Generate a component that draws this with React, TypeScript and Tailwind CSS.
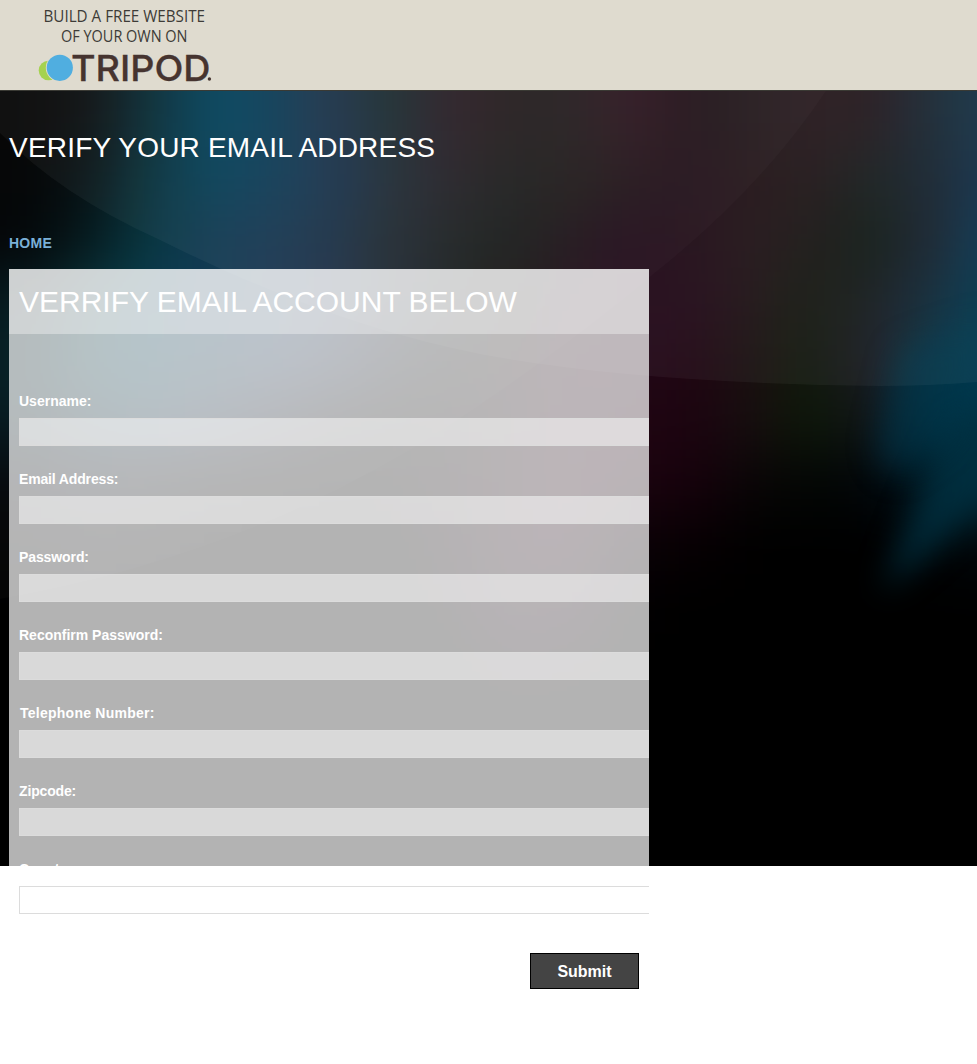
const COLS = 17;
const CELL = 60;

const GLOW: string[] = [
  '030303 080a0b 052832 00415a 083b55 1c3148 182a2e 291b23 211b1b 211c1d 2c121e 1e0f16 20161a 271a1e 25191d 1b2834 143448',
  '020304 040f12 05303a 023e56 0c3a54 17334d 1e2935 231e24 1b1d1c 1e1a19 1f1218 1f0d16 221318 22171a 18201f 16232f 122f4a',
  '000204 01161a 04343f 0e364e 14354f 182f43 1e262f 1a1f1f 161918 1b0f15 1e0816 200c16 221418 1b1614 0e1b14 19202c 083854',
  '03171c 083338 063a4e 0f3852 17344f 20304a 1c2530 181c1e 14130f 200d16 22081a 220a18 201216 141b10 181b1e 10283a 003a4e',
  '041d22 053440 073a4c 143648 1c3450 1c2a40 161a24 131414 1a1013 230914 220818 200512 1a1010 10190c 1c1a24 06303f 003c54',
  '04181e 082430 0c2a3e 14243a 131825 0e0f13 0b0c0b 0c0a0b 160b10 220816 200612 1c0410 180e10 0c1a08 141418 002d3e 003a50',
  '03060b 0a0c16 0b0c11 080808 070707 050505 050505 0e0508 1a0710 220714 1c0510 18000c 0a0607 030603 01060a 001620 003444',
  '030304 050507 040404 010101 000000 000000 000000 0a0206 190610 1d0712 0b0207 080003 000000 000000 000000 000406 00080c',
  '000000 000000 000000 000000 000000 000000 000000 050103 14050f 14040e 020001 000000 000000 000000 000000 000000 000000',
  '000000 000000 000000 000000 000000 000000 000000 000000 090206 070104 000000 000000 000000 000000 000000 000000 000000',
];

function Backdrop() {
  return (
    <svg className="absolute inset-x-0 top-0 h-[775px] w-full bg-black" viewBox="0 91 977 775" preserveAspectRatio="none" aria-hidden="true">
      <defs>
        <filter id="soft" filterUnits="userSpaceOnUse" x="-120" y="-30" width="1260" height="1000" colorInterpolationFilters="sRGB">
          <feGaussianBlur stdDeviation="29" />
        </filter>
        <filter id="streak" filterUnits="userSpaceOnUse" x="780" y="250" width="400" height="450" colorInterpolationFilters="sRGB">
          <feGaussianBlur stdDeviation="15" />
        </filter>
      </defs>
      <g filter="url(#soft)" shapeRendering="crispEdges">
        {GLOW.map((row, j) =>
          row.split(' ').map((c, i) => {
            const left = i === 0 ? -120 : i * CELL;
            const right = i === COLS - 1 ? 1140 : (i + 1) * CELL;
            const top = j === 0 ? -30 : 90 + j * CELL;
            const bottom = 90 + (j + 1) * CELL;
            return <rect key={`${i}-${j}`} x={left} y={top} width={right - left} height={bottom - top} fill={`#${c}`} />;
          }),
        )}
      </g>
      <path d="M1010 400V475Q950 540 882 592Q908 520 948 430Z" fill="#002f40" fillOpacity="0.85" filter="url(#streak)" />
      <path d="M900 350L990 320L950 440L900 475Q870 465 880 430Z" fill="#003a50" fillOpacity="0.5" filter="url(#streak)" />
      <path d="M0 133Q60 195 160 240Q330 325 480 354T880 386Q930 386 977 382V91H0Z" fill="#fff" fillOpacity="0.042" />
      <path d="M826 91Q760 190 651 276Q570 345 450 425Q250 555 0 599V91Z" fill="#fff" fillOpacity="0.02" />
    </svg>
  );
}

function Logo() {
  return (
    <svg className="ml-[30px] block h-[90px] w-[190px]" viewBox="30 0 190 90" role="img" aria-label="Tripod">
      <g fontFamily="'Open Sans', 'Noto Sans', sans-serif" fontSize="15.5" fill="#3d3b37">
        <text x="43.5" y="22" textLength="161.5" lengthAdjust="spacingAndGlyphs">BUILD A FREE WEBSITE</text>
        <text x="61" y="42" textLength="126.5" lengthAdjust="spacingAndGlyphs">OF YOUR OWN ON</text>
      </g>
      <circle cx="48.5" cy="70.5" r="9.8" fill="#a5d24f" />
      <circle cx="59.8" cy="67.8" r="14" fill="#dfdbcf" />
      <circle cx="59.8" cy="67.8" r="13.1" fill="#50aee0" />
      <text x="71" y="81" textLength="139.5" lengthAdjust="spacingAndGlyphs" fontFamily="Inter, sans-serif" fontWeight="500" fontSize="36" fill="#463430" stroke="#463430" strokeWidth="0.3">TRIPOD</text>
      <circle cx="209.4" cy="79" r="1.7" fill="#463430" />
    </svg>
  );
}

const FIELDS = [
  { label: 'Username:', spacing: 'tracking-normal' },
  { label: 'Email Address:', spacing: 'tracking-[-0.15px]' },
  { label: 'Password:', spacing: 'tracking-[-0.1px]' },
  { label: 'Reconfirm Password:', spacing: 'tracking-normal' },
  { label: 'Telephone Number:', spacing: 'pl-px tracking-[0.25px]' },
  { label: 'Zipcode:', spacing: 'tracking-[-0.15px]' },
  { label: 'Country:', spacing: 'tracking-normal' },
];

export default function App() {
  return (
    <div className="min-h-[1064px] bg-white font-['Liberation_Sans',Arial,sans-serif]">
      <header className="h-[91px] border-b border-[#3a3a34] bg-[#dfdbcf]">
        <Logo />
      </header>
      <div className="relative h-[973px] overflow-hidden">
        <Backdrop />
        <main className="relative pl-[9px]">
          <h1 className="pt-[39px] text-[28px] leading-9 tracking-[0.2px] whitespace-nowrap text-white">
            <span>VERIFY YOUR EMAIL ADDRESS</span>
          </h1>
          <nav className="mt-[67px] text-sm leading-5 font-bold tracking-[0.25px] text-[#7ab0d8]">
            <a href="#home">HOME</a>
          </nav>
          <section className="mt-[16px] h-[795px] w-[640px] overflow-hidden bg-white/70">
            <h2 className="h-[65px] bg-white/35 pl-[10px] text-[30px] leading-[66px] whitespace-nowrap text-white">
              <span>VERRIFY EMAIL ACCOUNT BELOW</span>
            </h2>
            <form className="pt-[56px] pl-[10px]" onSubmit={(e) => e.preventDefault()}>
              {FIELDS.map(({ label, spacing }) => (
                <label key={label} className="block h-[78px] w-[660px]">
                  <span className="block h-[28px] text-sm leading-[22px] font-bold text-white">
                    <span className={spacing}>{label}</span>
                  </span>
                  <input className="block h-[28px] w-full border border-[#dcdcdc] bg-white/50 outline-none" />
                </label>
              ))}
              <div className="flex w-[620px] justify-end pt-[17px]">
                <button className="h-[36px] w-[109px] border border-black bg-[#444] pt-[2px] text-base font-bold text-white">Submit</button>
              </div>
            </form>
          </section>
        </main>
      </div>
    </div>
  );
}
